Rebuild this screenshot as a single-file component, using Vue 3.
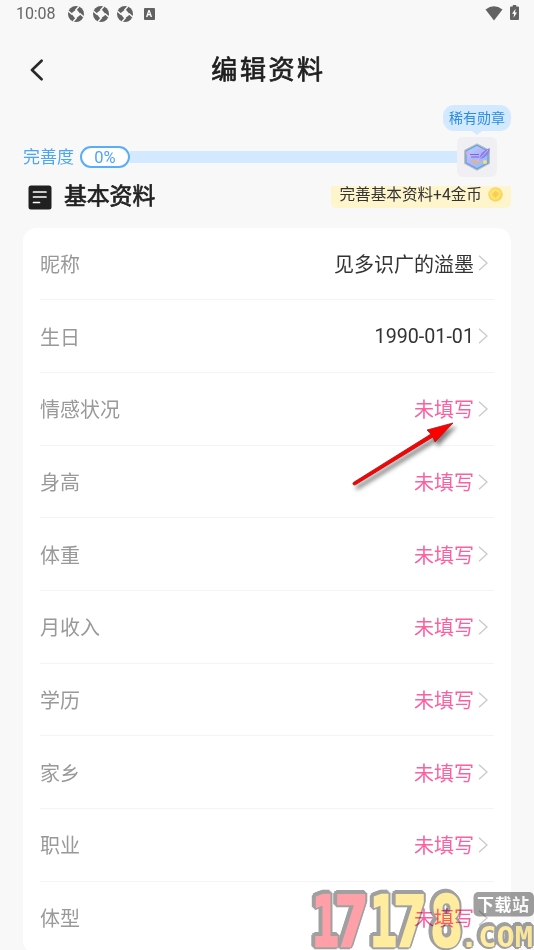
<script setup>
const rows = [
  { label: '昵称', value: '见多识广的溢墨', filled: true },
  { label: '生日', value: '1990-01-01', filled: true },
  ...['情感状况', '身高', '体重', '月收入', '学历', '家乡', '职业', '体型'].map((label) => ({
    label,
    value: '未填写',
    filled: false,
  })),
]
const digits = [
  { c: '1', x: 312, w: 27, color: '#ffa0a8' },
  { c: '7', x: 334.5, w: 34, color: '#ffa0a8' },
  { c: '1', x: 370, w: 27, color: '#ffec9f' },
  { c: '7', x: 393, w: 34, color: '#ffec9f' },
  { c: '8', x: 430, w: 33, color: '#ffec9f' },
]
</script>

<template>
  <div class="page">
    <header class="status">
      <span class="time">10:08</span>
      <svg v-for="n in 3" :key="n" class="shutter" viewBox="0 0 16 16">
        <circle cx="8" cy="8" r="8" fill="#626262" />
        <path d="M8.500 3.200L12.800 8.500L7.500 12.800L3.200 7.500Z" fill="#f8f8f8" />
        <path d="M7.500 4.200L11 .3M11.800 7.500L15.700 11M8.500 11.800L5 15.700M4.200 8.500L.3 5" stroke="#f8f8f8" stroke-width="1.500" />
      </svg>
      <span class="abox">A</span>
      <svg class="wifi" viewBox="0 0 18 15"><path d="M.5 3.5Q9-3 17.5 3.5L9 14.5Z" fill="#626262" /></svg>
      <svg class="battery" viewBox="0 0 9 15">
        <path d="M2.8 0h3.4v1.5H8q1 0 1 1V14q0 1-1 1H1q-1 0-1-1V2.500q0-1 1-1h1.800Z" fill="#626262" />
        <path d="M5.600 3.700L2 8.700h2.100L3.500 12.700L7 7.500H5Z" fill="#fff" />
      </svg>
    </header>

    <nav class="nav">
      <svg class="back" viewBox="0 0 14 22"><path d="M11.600 1.700L2 11L11.600 20.300" fill="none" stroke="#292929" stroke-width="2.600" stroke-linecap="round" stroke-linejoin="round" /></svg>
      <h1>编辑资料</h1>
    </nav>

    <section class="progress">
      <span class="plabel">完善度</span>
      <span class="pill">0%</span>
      <span class="track"></span>
      <div class="medal">
        <span class="tip">稀有勋章</span>
        <svg viewBox="0 0 28 28">
          <defs>
            <linearGradient id="gem" x1="0" y1="0" x2="1" y2="1">
              <stop offset="0" stop-color="#a5e7f5" />
              <stop offset=".45" stop-color="#b9b4fa" />
              <stop offset="1" stop-color="#83c4fa" />
            </linearGradient>
          </defs>
          <path d="M14 .8L26.500 7.300V20.500L14 27.200L1.500 20.500V7.300Z" fill="url(#gem)" stroke="#d2bd9c" stroke-width="1" />
          <path d="M14 2.200L25 8V19.800L14 25.800L3 19.800V8Z" fill="none" stroke="#58a7ed" stroke-width="1.300" />
          <path d="M7 11.500h9M8 14h8" stroke="#716bd8" stroke-width="1.200" />
          <path d="M16 17Q17 8 27 5Q26 14 17 16Z" fill="#8b80ea" />
          <path d="M14 18Q20 13 25 7" stroke="#d6c7ff" stroke-width=".8" fill="none" />
          <path d="M9 20q2-5 4 0q2-3 5 0" stroke="#e4b779" stroke-width="1.700" fill="none" />
          <circle cx="5" cy="10" r="2" fill="#e6a5f3" />
          <circle cx="22" cy="19" r="2" fill="#ffdc72" />
        </svg>
      </div>
    </section>

    <section class="heading">
      <svg class="doc" viewBox="0 0 24 25">
        <rect x=".5" y=".5" width="23" height="24" rx="2.500" fill="#202020" />
        <path d="M5.500 7h12.500M5.500 12h12.500M5.500 17.500h6" stroke="#fff" stroke-width="1.700" stroke-linecap="round" />
      </svg>
      <h2>基本资料</h2>
      <div class="reward">
        <span>完善基本资料+4金币</span>
        <svg viewBox="0 0 16 16">
          <circle cx="8" cy="8" r="7.700" fill="#f8d65c" />
          <circle cx="7.500" cy="7.500" r="6" fill="#ffe276" />
          <path d="M4 8L8 4L12 7L8 12Z" fill="#f7d050" />
        </svg>
      </div>
    </section>

    <main class="card">
      <div v-for="row in rows" :key="row.label" class="row">
        <span class="label">{{ row.label }}</span>
        <span class="value" :class="{ empty: !row.filled, date: row.label === '生日' }">{{ row.value }}</span>
        <svg class="chev" viewBox="0 0 10 16"><path d="M1 .8L9 8L1 15.200" fill="none" stroke="#cbcbcb" stroke-width="1.400" /></svg>
      </div>
    </main>

    <svg class="arrow" viewBox="0 0 120 80">
      <path d="M13.300 62.500L91 14L87 10L113 3L95 22L93 17L15 65Q12 65 13.300 62.500Z" fill="#f00" stroke="#a01818" stroke-width=".8" />
    </svg>

    <svg class="mark" viewBox="300 880 234 70">
      <g class="outlined">
        <text v-for="(d, i) in digits" :key="i" :x="d.x" y="945.500" :textLength="d.w" lengthAdjust="spacingAndGlyphs" class="digit" :fill="d.color" :stroke="d.color">{{ d.c }}</text>
        <text x="460" y="947" textLength="73" lengthAdjust="spacingAndGlyphs" class="com">.COM</text>
      </g>
      <rect x="473.500" y="892" width="60.500" height="24.500" rx="5" fill="#a0a0a0" />
      <text x="477" y="911" textLength="52" class="site">下载站</text>
    </svg>
  </div>
</template>

<style>
body { margin: 0; background: #f8f8f8; overflow: hidden; }
</style>

<style scoped>
.page {
  position: relative;
  width: 534px;
  height: 950px;
  overflow: hidden;
  background: #f8f8f8;
  font-family: Roboto, 'Noto Sans CJK SC', sans-serif;
}
.status { display: flex; align-items: center; height: 27px; padding: 0 15px 0 16px; box-sizing: border-box; color: #666; }
.time { width: 52px; font-size: 16px; letter-spacing: -0.1px; line-height: 28px; }
.shutter { width: 16px; height: 16px; margin-right: 8.500px; }
.abox { width: 11px; height: 12px; margin-left: 2px; background: #626262; color: #fff; border-radius: 1px; font-size: 9px; font-weight: 700; line-height: 12px; text-align: center; }
.wifi { width: 18px; height: 15px; margin-left: auto; margin-top: -1px; }
.battery { width: 9px; height: 15px; margin-left: 7px; margin-top: -2px; }
.nav { position: relative; display: flex; align-items: center; justify-content: center; height: 84px; }
.back { position: absolute; left: 29.500px; top: 32px; width: 14px; height: 22px; }
h1 { margin: 2px 0 0; font-size: 26px; font-weight: 400; letter-spacing: 2.600px; color: #202020; line-height: 40px; padding-left: 3px; -webkit-text-stroke: 0.7px; }
.progress { display: flex; align-items: center; height: 40px; margin-top: 26px; padding-left: 23px; color: #4ba5fa; }
.plabel { width: 57px; font-size: 17px; line-height: 24px; }
.pill { width: 50px; height: 22px; box-sizing: border-box; border: 2px solid #5aadfb; border-radius: 11px; background: #fff; font-size: 16.500px; line-height: 19px; text-align: center; }
.track { width: 327px; height: 12px; background: #d2e9ff; }
.medal { position: relative; display: flex; align-items: center; justify-content: center; width: 40px; height: 40px; border-radius: 6px; background: #f0f0f4; }
.medal svg { width: 28px; height: 28px; }
.tip { position: absolute; left: -14px; top: -32px; width: 68px; height: 26px; border-radius: 11px; background: #d2e9ff; color: #2b8ce2; font-size: 14px; line-height: 26px; text-align: center; white-space: nowrap; }
.tip::after { content: ''; position: absolute; left: 29px; top: 26px; border: 5px solid transparent; border-top: 4px solid #d2e9ff; border-bottom: 0; }
.heading { display: flex; align-items: center; height: 40px; padding: 0 23px 0 28px; }
.doc { width: 24px; height: 25px; }
h2 { margin: 0 auto 0 12px; font-size: 22.800px; font-weight: 400; color: #222; line-height: 34px; -webkit-text-stroke: 0.700px; }
.reward { display: flex; align-items: center; justify-content: space-between; width: 180px; height: 24px; padding: 0 8.500px; margin-top: -2px; box-sizing: border-box; background: linear-gradient(transparent 2px, #fff5cd 2px); border-radius: 0 0 5px 5px; color: #333; font-size: 15.600px; line-height: 22px; white-space: nowrap; }
.reward span { margin-top: -2px; }
.reward svg { width: 15px; height: 15px; flex: none; margin-top: -4px; }
.card { margin: 10.600px 23px 0; padding: 0 17px; border-radius: 14px; background: #fff; }
.row { display: flex; align-items: center; height: 72.700px; box-sizing: border-box; border-bottom: 1px solid #f4f4f4; font-size: 20px; }
.label { color: #999; }
.value { margin-left: auto; color: #333; }
.date { font-size: 19.700px; padding-top: 1px; }
.empty { color: #fc60a1; }
.chev { width: 10px; height: 16px; margin: 0 6px 0 4px; }
.arrow { position: absolute; left: 340px; top: 420px; width: 120px; height: 80px; filter: drop-shadow(3px 4px 2px rgba(0, 0, 0, 0.5)); }
.mark { position: absolute; left: 300px; top: 880px; width: 234px; height: 70px; mix-blend-mode: multiply; }
.outlined { filter: drop-shadow(1.300px 1.300px 0 #a0a0a0) drop-shadow(-1.300px -1.300px 0 #a0a0a0) drop-shadow(1.300px -1.300px 0 #a0a0a0) drop-shadow(-1.300px 1.300px 0 #a0a0a0); }
.digit { font: 700 70px 'DejaVu Sans Mono', monospace; stroke-width: 2.500px; stroke-linejoin: miter; }
.com { font: 700 28px 'DejaVu Sans Mono', monospace; fill: #ffec9f; }
.site { font: 700 17px 'Noto Sans CJK SC', sans-serif; fill: #fff; }
</style>
